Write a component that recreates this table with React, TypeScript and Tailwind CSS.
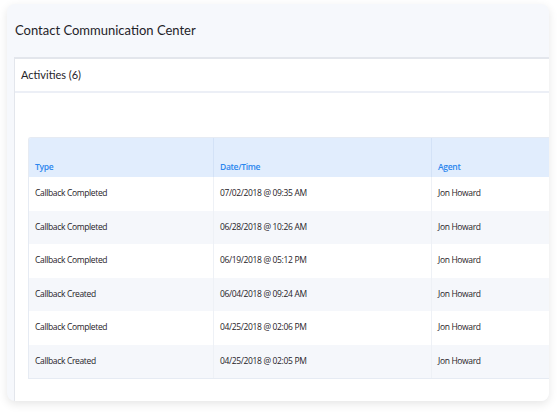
import React from 'react';

const rows = [
  { type: 'Callback Completed', date: '07/02/2018 @ 09:35 AM', agent: 'Jon Howard' },
  { type: 'Callback Completed', date: '06/28/2018 @ 10:26 AM', agent: 'Jon Howard' },
  { type: 'Callback Completed', date: '06/19/2018 @ 05:12 PM', agent: 'Jon Howard' },
  { type: 'Callback Created', date: '06/04/2018 @ 09:24 AM', agent: 'Jon Howard' },
  { type: 'Callback Completed', date: '04/25/2018 @ 02:06 PM', agent: 'Jon Howard' },
  { type: 'Callback Created', date: '04/25/2018 @ 02:05 PM', agent: 'Jon Howard' },
];

const App = () => {
  return (
    <div className="w-[558px] h-[413px] bg-white overflow-hidden pt-[4px] pl-[7px] font-['Open_Sans',sans-serif]">
      <div className="w-[542px] h-[397px] rounded-lg bg-[#f6f8fc] shadow-[0_3px_10px_rgba(0,0,0,0.10)] flex flex-col overflow-hidden">
        {/* Title */}
        <div className="h-[53px] flex items-center pl-[8px]">
          <h1 className="text-[13px] text-[#1f2328] font-['Lato',sans-serif]">
            Contact Communication Center
          </h1>
        </div>

        {/* Activities panel */}
        <div className="flex-1 ml-[7px] bg-white border-t-2 border-l border-[#e3e6ec] flex flex-col">
          <div className="h-[34px] flex items-center pl-[6px] border-b-2 border-[#eceff6]">
            <span className="text-[11px] text-[#1f2328] font-['Lato',sans-serif]">Activities (6)</span>
          </div>

          <div className="pt-[44px] pl-[13px]">
            <div className="border border-r-0 border-[#e6ebf3] rounded-tl-[3px] overflow-hidden">
              <div className="flex h-[39px] bg-[#e1edfd] text-[#2b86ee] text-[8.5px] tracking-[-0.3px] font-semibold">
                <div className="w-[185px] flex items-end pb-[3px] pl-[6px] border-r border-[#d3e2f7]">Type</div>
                <div className="w-[218px] flex items-end pb-[3px] pl-[6px] border-r border-[#d3e2f7]">Date/Time</div>
                <div className="flex-1 flex items-end pb-[3px] pl-[6px]">Agent</div>
              </div>
              {rows.map((r, i) => (
                <div
                  key={i}
                  className={`flex h-[33.5px] items-stretch text-[8.5px] tracking-[-0.35px] font-medium text-[#1f2228] ${i % 2 === 1 ? 'bg-[#f5f7fb]' : 'bg-white'}`}
                >
                  <div className="w-[185px] flex items-center pl-[6px] border-r border-[#eef1f6]">{r.type}</div>
                  <div className="w-[218px] flex items-center pl-[6px] border-r border-[#eef1f6]">{r.date}</div>
                  <div className="flex-1 flex items-center pl-[6px]">{r.agent}</div>
                </div>
              ))}
            </div>
          </div>
        </div>
      </div>
    </div>
  );
};

export default App;
